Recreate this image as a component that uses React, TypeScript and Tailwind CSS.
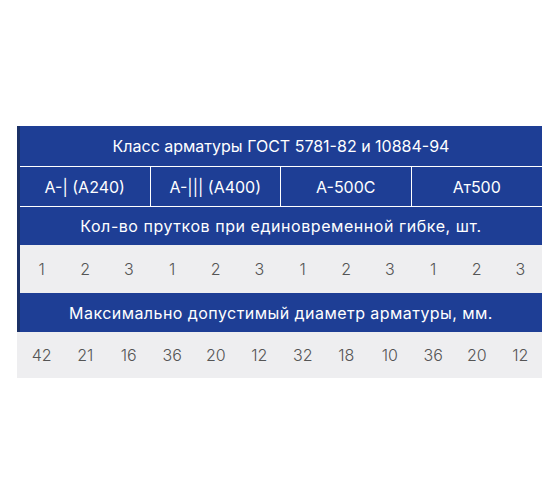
import React from "react";

const classes = ["А-| (А240)", "А-||| (А400)", "А-500С", "Ат500"];
const bars = [1, 2, 3, 1, 2, 3, 1, 2, 3, 1, 2, 3];
const diameters = [42, 21, 16, 36, 20, 12, 32, 18, 10, 36, 20, 12];

const NumberRow = ({ values, height }: { values: number[]; height: string }) => (
  <div className={`grid grid-cols-12 bg-[#eeeef0] text-[#555] text-[16px] font-light ${height}`}>
    {values.map((v, i) => (
      <div key={i} className="flex items-center justify-center">
        {v}
      </div>
    ))}
  </div>
);

export default function App() {
  return (
    <div
      className="w-[560px] h-[504px] bg-white pt-[126px] pl-[17px]"
      style={{ fontFamily: "Inter, 'Open Sans', sans-serif" }}
    >
      <div className="w-[525px]">
        <div className="border-l-[3px] border-[#1b3167]">
          <div className="h-[41px] bg-[#1e3e95] text-white text-[16px] flex items-center justify-center border-b border-white">
            Класс арматуры ГОСТ 5781-82 и 10884-94
          </div>
          <div className="h-[40px] bg-[#1e3e95] text-white text-[16px] grid grid-cols-4 border-b border-white">
            {classes.map((c, i) => (
              <div
                key={c}
                className={`flex items-center justify-center ${i < 3 ? "border-r border-white" : ""}`}
              >
                {c}
              </div>
            ))}
          </div>
          <div className="h-[38px] bg-[#1e3e95] text-white text-[16px] tracking-[0.55px] flex items-center justify-center">
            Кол-во прутков при единовременной гибке, шт.
          </div>
          <NumberRow values={bars} height="h-[48px]" />
          <div className="h-[39px] bg-[#1e3e95] text-white text-[16px] tracking-[0.45px] flex items-center justify-center">
            Максимально допустимый диаметр арматуры, мм.
          </div>
        </div>
        <div className="pl-[3px] bg-[#eeeef0]">
          <NumberRow values={diameters} height="h-[46px]" />
        </div>
      </div>
    </div>
  );
}
